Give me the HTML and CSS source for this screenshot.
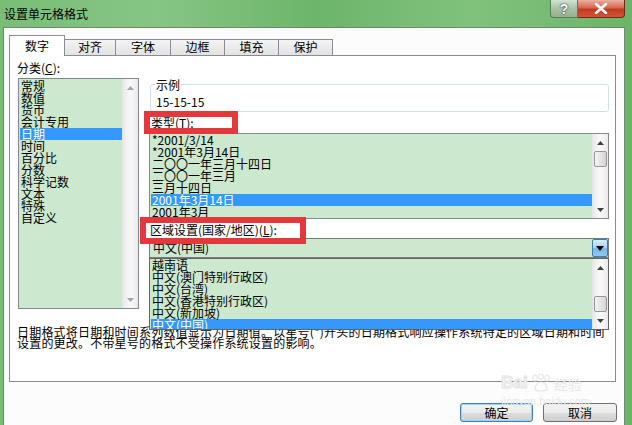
FILE: index.html
```html
<!DOCTYPE html>
<html lang="zh-CN">
<head>
    <meta charset="UTF-8">
    <title>设置单元格格式</title>
    <link rel="stylesheet" href="styles.css">
</head>
<body>
    <div class="window">
        <div class="titlebar">
            <span class="title">设置单元格格式</span>
            <div class="caption">
                <span class="cap-help">?</span>
                <span class="cap-close">
                    <svg width="14" height="11" viewBox="0 0 14 11"><path d="M2 1l10 9M12 1L2 10" stroke="#fff" stroke-width="2.6" stroke-linecap="round"/></svg>
                </span>
            </div>
        </div>

        <div class="frame">
            <div class="tabs">
                <span class="tab active">数字</span>
                <span class="tab t2">对齐</span>
                <span class="tab t3">字体</span>
                <span class="tab t4">边框</span>
                <span class="tab t5">填充</span>
                <span class="tab t6">保护</span>
            </div>

            <div class="panel">
                <div class="panel-main">
                    <div class="col-left">
                        <div class="cat-label">分类(<u>C</u>):</div>
                        <div class="listbox cat-list">
                            <ul class="items">
                                <li>常规</li>
                                <li>数值</li>
                                <li>货币</li>
                                <li>会计专用</li>
                                <li class="sel">日期</li>
                                <li>时间</li>
                                <li>百分比</li>
                                <li>分数</li>
                                <li>科学记数</li>
                                <li>文本</li>
                                <li>特殊</li>
                                <li>自定义</li>
                            </ul>
                            <div class="scrollbar off">
                                <span class="sb-arrow"><svg width="7" height="4"><path d="M0 4h7L3.5 0z"/></svg></span>
                                <span class="sb-track"></span>
                                <span class="sb-arrow"><svg width="7" height="4"><path d="M0 0h7L3.5 4z"/></svg></span>
                            </div>
                        </div>
                    </div>

                    <div class="col-right">
                        <div class="sample">
                            <div class="sample-title">示例</div>
                            <div class="sample-value">15-15-15</div>
                        </div>

                        <div class="field-label type-label">类型(<u>T</u>):</div>
                        <div class="listbox type-list">
                            <ul class="items">
                                <li>*2001/3/14</li>
                                <li>*2001年3月14日</li>
                                <li>二〇〇一年三月十四日</li>
                                <li>二〇〇一年三月</li>
                                <li>三月十四日</li>
                                <li class="sel">2001年3月14日</li>
                                <li>2001年3月</li>
                            </ul>
                            <div class="scrollbar">
                                <span class="sb-arrow"><svg width="7" height="4"><path d="M0 4h7L3.5 0z"/></svg></span>
                                <span class="sb-track"><span class="sb-thumb"></span></span>
                                <span class="sb-arrow"><svg width="7" height="4"><path d="M0 0h7L3.5 4z"/></svg></span>
                            </div>
                        </div>

                        <div class="field-label region-label">区域设置(国家/地区)(<u>L</u>):</div>
                        <div class="combo">
                            <span class="combo-value">中文(中国)</span>
                            <span class="combo-btn"><svg width="8" height="5"><path d="M0 0h8L4 5z"/></svg></span>

                            <div class="dropdown">
                                <ul class="items">
                                    <li>越南语</li>
                                    <li>中文(澳门特别行政区)</li>
                                    <li>中文(台湾)</li>
                                    <li>中文(香港特别行政区)</li>
                                    <li>中文(新加坡)</li>
                                    <li class="sel">中文(中国)</li>
                                </ul>
                                <div class="scrollbar bottom">
                                    <span class="sb-arrow"><svg width="7" height="4"><path d="M0 4h7L3.5 0z"/></svg></span>
                                    <span class="sb-track"><span class="sb-thumb"></span></span>
                                    <span class="sb-arrow"><svg width="7" height="4"><path d="M0 0h7L3.5 4z"/></svg></span>
                                </div>
                            </div>
                        </div>
                    </div>
                </div>

                <p class="desc">日期格式将日期和时间系列数值显示为日期值。以星号(*)开头的日期格式响应操作系统特定的区域日期和时间<br>设置的更改。不带星号的格式不受操作系统设置的影响。</p>
            </div>

            <div class="buttons">
                <span class="btn default">确定</span>
                <span class="btn">取消</span>
            </div>

            <div class="watermark">
                <div class="wm-top">
                    <span class="wm-bai">Bai</span>
                    <svg width="22" height="18" viewBox="0 0 22 18"><g fill="none" stroke="#e6e6e6" stroke-width="1.2"><ellipse cx="5" cy="4" rx="2.2" ry="3"/><ellipse cx="11" cy="2.8" rx="2.2" ry="2.6"/><ellipse cx="17" cy="4" rx="2.2" ry="3"/><path d="M5 15c0-5 4-7 6-7s6 2 6 7c0 2-3 2-6 2s-6 0-6-2z"/></g></svg>
                    <span class="wm-cn">经验</span>
                </div>
                <div class="wm-url">jingyan.baidu.com</div>
            </div>
        </div>
    </div>
</body>
</html>
```

FILE: styles.css
```css
*,
*::before,
*::after {
    box-sizing: border-box;
}
body {
    margin: 0;
    font-family: "Noto Sans CJK SC", "Liberation Sans", sans-serif;
    font-size: 12px;
    color: #000;
}
ul {
    list-style: none;
    margin: 0;
    padding: 0;
}
.window {
    width: 632px;
    height: 425px;
    overflow: hidden;
    display: flex;
    flex-direction: column;
    padding: 0 7px 0 3px;
    background: linear-gradient(90deg, #79bd77 0%, #86c683 25%, #6db56b 50%, #80c27d 75%, #6cb46a 100%);
}
.titlebar {
    height: 27px;
    flex-shrink: 0;
    display: flex;
    justify-content: space-between;
    align-items: flex-start;
}
.title {
    margin: 7px 0 0 1px;
    line-height: 14px;
}
.caption {
    display: flex;
}
.cap-help,
.cap-close {
    height: 18px;
    display: flex;
    align-items: center;
    justify-content: center;
    border: 1px solid #5d7a5d;
    border-top: none;
}
.cap-help {
    width: 28px;
    border-radius: 0 0 0 4px;
    background: linear-gradient(#d3e3d1, #a9c2a6 50%, #93b090);
    color: #fff;
    font: bold 14px "Liberation Sans", sans-serif;
    text-shadow: 0 0 2px #333, 0 0 1px #333;
}
.cap-close {
    width: 47px;
    border-left: none;
    border-color: #6b2a1c;
    border-radius: 0 0 4px 0;
    background: linear-gradient(#eab0a2, #d7684f 45%, #c2391d 55%, #d2553a);
}

.frame {
    flex: 1;
    position: relative;
    padding: 7px 0 0 5px;
    background: #fcfcfc;
    border: 1px solid #6d8c6b;
    border-bottom: none;
}
.tabs {
    height: 20px;
    display: flex;
    align-items: flex-end;
}
.tab {
    height: 16px;
    line-height: 14px;
    text-align: center;
    margin-right: -1px;
    border: 1px solid #898c95;
    border-bottom: none;
    background: linear-gradient(#f4f4f4, #e2e2e2);
}
.tab.active {
    position: relative;
    z-index: 2;
    width: 56px;
    height: 21px;
    line-height: 20px;
    margin-bottom: -1px;
    background: #fff;
}
.t2 { width: 52px; }
.t3 { width: 56px; }
.t4,
.t5,
.t6 { width: 55px; }

.panel {
    position: relative;
    width: 607px;
    height: 327px;
    border: 1px solid #898c95;
    background: #fff;
}
.panel-main {
    display: flex;
    height: 253px;
    padding: 4px 0 0 7px;
}
.col-left {
    width: 122px;
}
.cat-label {
    line-height: 15px;
}
.listbox {
    display: flex;
    border: 1px solid #828790;
    background: #cce8cf;
}
.cat-list {
    width: 121px;
    height: 231px;
    margin: 3px 0 0 1px;
}
.items {
    flex: 1;
    min-width: 0;
    overflow: hidden;
}
.items li {
    height: 12px;
    line-height: 12px;
    margin-left: 1px;
    padding-left: 1px;
    white-space: nowrap;
}
.items li.sel {
    background: #3399ff;
    color: #fff;
}
.cat-list .items {
    padding-top: 1px;
}

.scrollbar {
    width: 16px;
    display: flex;
    flex-direction: column;
    background: linear-gradient(90deg, #e9e9e9, #f7f7f7 40%, #f7f7f7 60%, #e9e9e9);
    border-left: 1px solid #e5e5e5;
}
.sb-arrow {
    height: 17px;
    display: flex;
    align-items: center;
    justify-content: center;
    fill: #3f3f3f;
}
.scrollbar.off .sb-arrow {
    fill: #a3a3a3;
}
.sb-track {
    flex: 1;
    display: flex;
    flex-direction: column;
}
.scrollbar.bottom .sb-track {
    justify-content: flex-end;
}
.sb-thumb {
    height: 16px;
    margin: 0 1px;
    border: 1px solid #979797;
    border-radius: 2px;
    background: linear-gradient(90deg, #f5f5f5, #e4e4e4 50%, #d5d5d5);
}

.col-right {
    width: 460px;
    margin-left: 10px;
}
.sample {
    height: 28px;
    margin: 24px 0 0 1px;
    padding: 0 4px;
    border: 1px solid #d5dfe5;
    border-radius: 3px;
}
.sample-title {
    width: fit-content;
    margin-top: -7px;
    padding: 0 1px;
    line-height: 14px;
    background: #fff;
}
.sample-value {
    padding: 4px 0 0 1px;
    line-height: 12px;
}
.field-label {
    position: relative;
    z-index: 3;
    line-height: 14px;
}
.field-label::after {
    content: '';
    position: absolute;
    border: 6px solid #e4393c;
}
.type-label {
    margin-top: 4px;
    padding-left: 2px;
}
.type-label::after {
    left: -5px;
    top: -5px;
    width: 94px;
    height: 23px;
}
.type-list {
    height: 86px;
    margin-top: 3px;
}
.region-label {
    margin-top: 4px;
    padding-left: 1px;
}
.region-label::after {
    left: -9px;
    top: -6px;
    width: 166px;
    height: 27px;
}

.combo {
    position: relative;
    z-index: 2;
    height: 20px;
    margin-top: 1px;
    display: flex;
    justify-content: space-between;
    border: 1px solid #7a7a7a;
    background: #cce8cf;
}
.combo-value {
    padding-left: 3px;
    line-height: 18px;
}
.combo-btn {
    width: 16px;
    display: flex;
    align-items: center;
    justify-content: center;
    border: 1px solid #3c7fb1;
    border-radius: 2px;
    background: linear-gradient(#d7edfb, #a8d5f5 45%, #77b9e8 55%, #8ec8ef);
}
.dropdown {
    position: absolute;
    left: -1px;
    top: 19px;
    width: 460px;
    height: 72px;
    display: flex;
    border: 1px solid #646464;
    background: #cce8cf;
}

.desc {
    margin: 17px 0 0 7px;
    line-height: 11px;
    white-space: nowrap;
    letter-spacing: 0.2px;
}

.buttons {
    display: flex;
    justify-content: flex-end;
    gap: 10px;
    margin-top: 21px;
    padding-right: 7px;
}
.btn {
    width: 74px;
    height: 19px;
    line-height: 17px;
    text-align: center;
    border: 1px solid #707070;
    border-radius: 3px;
    background: linear-gradient(#f2f2f2, #ebebeb 50%, #dddddd 51%, #cfcfcf);
}
.btn.default {
    width: 73px;
    border-color: #3c7fb1;
    box-shadow: inset 0 0 0 1px #9fd5f5;
}

.watermark {
    position: absolute;
    right: 34px;
    bottom: 19px;
    color: #e8e8e8;
    text-align: center;
}
.wm-top {
    display: flex;
    align-items: flex-end;
    gap: 2px;
}
.wm-bai {
    font: bold 17px "Liberation Sans", sans-serif;
    line-height: 18px;
    color: #f6f6f6;
    -webkit-text-stroke: 1px #e4e4e4;
}
.wm-cn {
    font-size: 14px;
    line-height: 16px;
}
.wm-url {
    margin-top: 4px;
    font: 11px "Liberation Sans", sans-serif;
    line-height: 10px;
}
```
